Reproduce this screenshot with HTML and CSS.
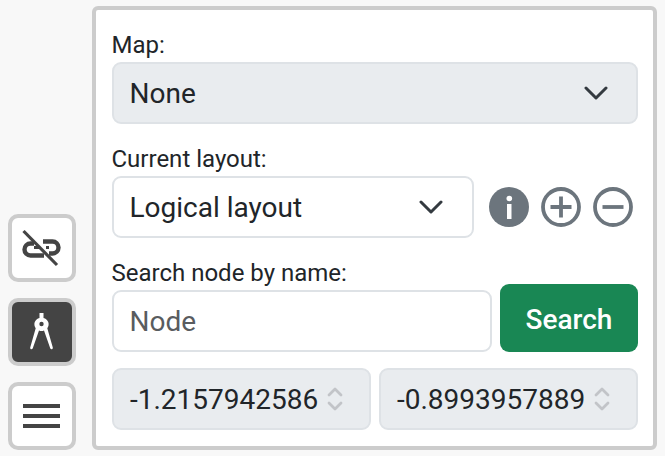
FILE: index.html
```html
<!DOCTYPE html>
<html lang="en">
<head>
<meta charset="utf-8">
<title>Map panel</title>
<link rel="stylesheet" href="styles.css">
</head>
<body>
<div class="app">
  <nav class="toolbar">
    <button class="tool">
      <svg class="tool-icon" viewBox="0 0 44 44"><g fill="none" stroke="#444" stroke-width="4.400"><path d="M14 17.500h-3.500a6 6 0 0 0 0 12H24"/><path d="M23 15.500h9.500a6 6 0 0 1 0 12H29"/></g><path d="M14 21.500h5M26 21.500h3" stroke="#444" stroke-width="3"/><path d="M3.500 5 37 39" stroke="#444" stroke-width="3.200"/></svg>
    </button>
    <button class="tool tool-active">
      <svg class="tool-icon" viewBox="0 0 44 44"><path d="M19.500 3h4v5a6.500 6.500 0 0 1 3.800 10.300L32.800 37.500c.3 1.700-1.500 2.500-2.500 1L24 20.400a6.500 6.500 0 0 1-5 0L12.700 38.500c-1 1.500-2.800.7-2.500-1l5.500-19.200a6.500 6.500 0 0 1 3.800-10.300z" fill="#fff"/><circle cx="21.500" cy="14" r="2.200" fill="#444"/></svg>
    </button>
    <button class="tool">
      <svg class="tool-icon" viewBox="0 0 44 44"><path d="M3 12h37M3 22h37M3 32h37" stroke="#444" stroke-width="4.200"/></svg>
    </button>
  </nav>
  <main class="panel">
    <div class="field">
      <label class="label">Map:</label>
      <div class="control select select-disabled"><span>None</span>
        <svg class="chevron" viewBox="0 0 24 14"><path d="M2 2l10 10L22 2" fill="none" stroke="#343a40" stroke-width="3" stroke-linecap="round" stroke-linejoin="round"/></svg>
      </div>
    </div>
    <div class="field">
      <label class="label">Current layout:</label>
      <div class="row">
        <div class="control select layout-select"><span>Logical layout</span>
          <svg class="chevron" viewBox="0 0 24 14"><path d="M2 2l10 10L22 2" fill="none" stroke="#343a40" stroke-width="3" stroke-linecap="round" stroke-linejoin="round"/></svg>
        </div>
        <div class="icons">
          <svg class="round-icon" viewBox="0 0 40 40"><circle cx="20" cy="20" r="20" fill="#6c757d"/><circle cx="20.300" cy="11.500" r="2.800" fill="#fff"/><path d="M18 17h4.500v15H18z" fill="#fff"/></svg>
          <svg class="round-icon" viewBox="0 0 40 40"><circle cx="20" cy="20" r="18" fill="none" stroke="#6c757d" stroke-width="3.800"/><path d="M20 9.500v21M9.500 20h21" stroke="#6c757d" stroke-width="3.800"/></svg>
          <svg class="round-icon" viewBox="0 0 40 40"><circle cx="20" cy="20" r="18" fill="none" stroke="#6c757d" stroke-width="3.800"/><path d="M9.500 20h21" stroke="#6c757d" stroke-width="3.800"/></svg>
        </div>
      </div>
    </div>
    <div class="field">
      <label class="label">Search node by name:</label>
      <div class="row search-row">
        <div class="control node-input"><span>Node</span></div>
        <button class="search">Search</button>
      </div>
    </div>
    <div class="coords">
      <div class="control coord select-disabled"><span>-1.2157942586</span>
        <svg class="spin" viewBox="0 0 16 26"><path d="M2 9l6-6 6 6M2 17l6 6 6-6" fill="none" stroke="#c2c4c8" stroke-width="2.800" stroke-linecap="round" stroke-linejoin="round"/></svg>
      </div>
      <div class="control coord select-disabled"><span>-0.8993957889</span>
        <svg class="spin" viewBox="0 0 16 26"><path d="M2 9l6-6 6 6M2 17l6 6 6-6" fill="none" stroke="#c2c4c8" stroke-width="2.800" stroke-linecap="round" stroke-linejoin="round"/></svg>
      </div>
    </div>
  </main>
</div>
</body>
</html>
```
FILE: styles.css
```css
* { box-sizing: border-box; }
html, body { margin: 0; height: 100%; }
body {
  background: #f8f8f8;
  font-family: Roboto, "Liberation Sans", sans-serif;
  color: #212529;
  overflow: hidden;
}
.app {
  display: flex;
  align-items: flex-end;
  gap: 16px;
  width: 665px;
  height: 456px;
  padding: 6px 8px 6px 8px;
}
.toolbar {
  display: flex;
  flex-direction: column;
  gap: 16px;
  flex: none;
}
.tool {
  width: 68px;
  height: 68px;
  padding: 0;
  display: flex;
  align-items: center;
  justify-content: center;
  background: #fff;
  border: 4px solid #ccc;
  border-radius: 10px;
}
.tool-active { background: #444; }
.tool-icon { width: 44px; height: 44px; display: block; }
.panel {
  width: 565px;
  height: 444px;
  flex: none;
  background: #fff;
  border: 4px solid #ccc;
  border-radius: 6px;
  padding: 16px 15px 0 16px;
  display: flex;
  flex-direction: column;
}
.field { margin-bottom: 16px; }
.label {
  display: block;
  font-size: 24px;
  line-height: 38px;
  margin-bottom: -2px;
  margin-left: -0.5px;
}
.row { display: flex; align-items: flex-end; }
.control {
  display: flex;
  align-items: center;
  height: 62px;
  border: 2px solid #dee2e6;
  border-radius: 9px;
  font-size: 28px;
  background: #fff;
  padding: 0 16px 0 15.5px;
}
.select { justify-content: space-between; padding-right: 28px; }
.select-disabled { background: #e9ecef; }
.chevron { width: 24px; height: 14px; display: block; }
.layout-select { width: 362px; flex: none; padding-right: 29px; }
.icons { display: flex; gap: 12px; margin-left: 14.5px; align-self: center; }
.round-icon { width: 40px; height: 40px; display: block; }
.search-row { gap: 8px; }
.node-input { width: 380px; flex: none; color: #595c5f; }
.search {
  flex: 1;
  height: 68px;
  margin-top: -6px;
  border: none;
  border-radius: 9px;
  background: #198754;
  color: #fff;
  font: 500 28px Roboto, "Liberation Sans", sans-serif;
  padding: 2px 0 0;
}
.coords { display: flex; gap: 8px; }
.coord { flex: 1; justify-content: space-between; padding: 0 26px 0 16px; }
.spin { width: 16px; height: 26px; display: block; flex: none; }
```
